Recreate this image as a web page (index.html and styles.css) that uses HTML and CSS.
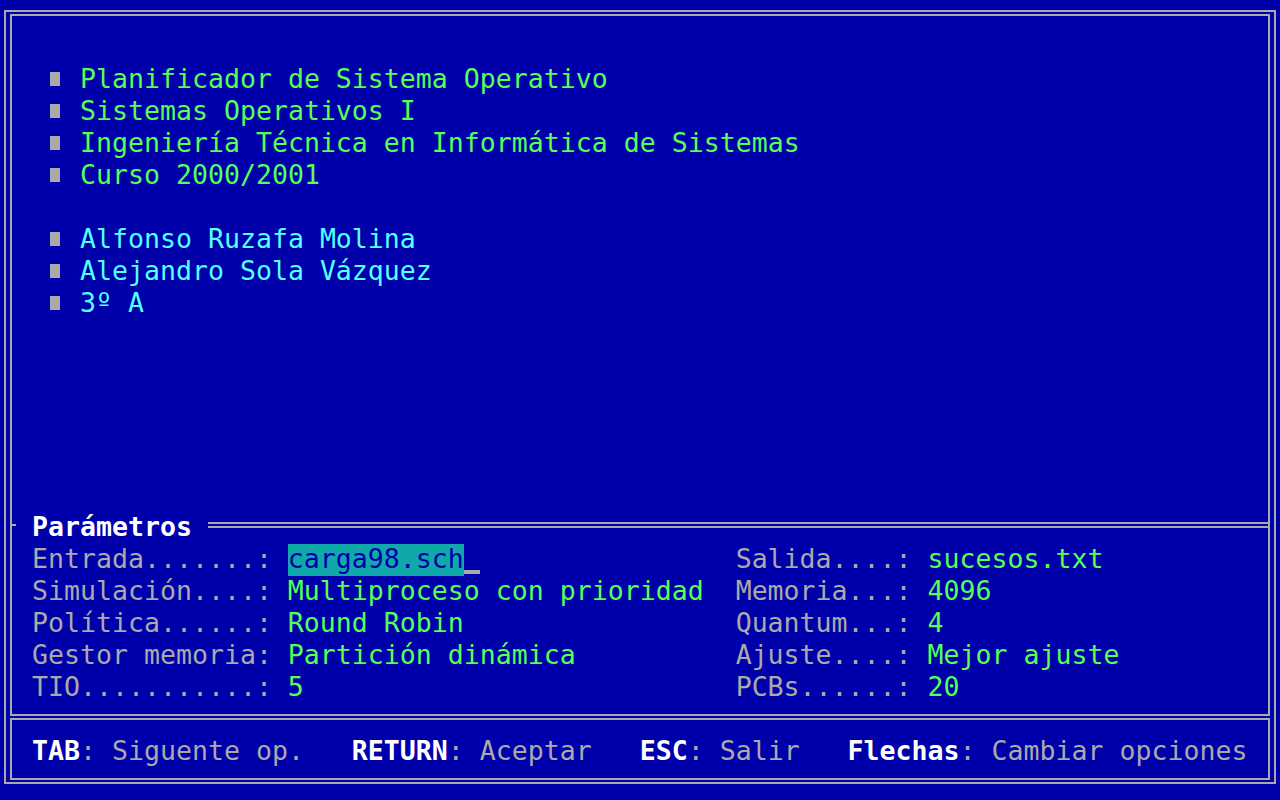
FILE: index.html
```html
<!DOCTYPE html>
<html lang="es">
<head>
<meta charset="utf-8">
<title>Planificador de Sistema Operativo</title>
<link rel="stylesheet" href="styles.css">
</head>
<body>
<div class="outer">
  <div class="panel panel-main">
    <div class="info">
      <ul class="list list-course">
        <li class="item"><span class="bullet"></span><span>Planificador de Sistema Operativo</span></li>
        <li class="item"><span class="bullet"></span><span>Sistemas Operativos I</span></li>
        <li class="item"><span class="bullet"></span><span>Ingeniería Técnica en Informática de Sistemas</span></li>
        <li class="item"><span class="bullet"></span><span>Curso 2000/2001</span></li>
      </ul>
      <ul class="list list-authors">
        <li class="item"><span class="bullet"></span><span>Alfonso Ruzafa Molina</span></li>
        <li class="item"><span class="bullet"></span><span>Alejandro Sola Vázquez</span></li>
        <li class="item"><span class="bullet"></span><span>3º A</span></li>
      </ul>
    </div>
    <div class="divider"><span class="stub"></span><span class="title">Parámetros</span><span class="rule"></span></div>
    <div class="params">
      <div class="param"><span class="label">Entrada.......:</span><span class="value"><span class="field">carga98.sch</span><span class="cursor"></span></span></div>
      <div class="param"><span class="label label-short">Salida....:</span><span class="value">sucesos.txt</span></div>
      <div class="param"><span class="label">Simulación....:</span><span class="value">Multiproceso con prioridad</span></div>
      <div class="param"><span class="label label-short">Memoria...:</span><span class="value">4096</span></div>
      <div class="param"><span class="label">Política......:</span><span class="value">Round Robin</span></div>
      <div class="param"><span class="label label-short">Quantum...:</span><span class="value">4</span></div>
      <div class="param"><span class="label">Gestor memoria:</span><span class="value">Partición dinámica</span></div>
      <div class="param"><span class="label label-short">Ajuste....:</span><span class="value">Mejor ajuste</span></div>
      <div class="param"><span class="label">TIO...........:</span><span class="value">5</span></div>
      <div class="param"><span class="label label-short">PCBs......:</span><span class="value">20</span></div>
    </div>
  </div>
  <div class="panel panel-keys">
    <div class="keys">
      <span class="hint"><span class="key">TAB</span>: Siguente op.</span>
      <span class="hint"><span class="key">RETURN</span>: Aceptar</span>
      <span class="hint"><span class="key">ESC</span>: Salir</span>
      <span class="hint"><span class="key">Flechas</span>: Cambiar opciones</span>
    </div>
  </div>
</div>
</body>
</html>
```

FILE: styles.css
```css
html, body {
  margin: 0;
  padding: 0;
}

body {
  width: 1280px;
  height: 800px;
  overflow: hidden;
  background: #0000aa;
  color: #aaaaaa;
  font-family: "DejaVu Sans Mono", "Liberation Mono", monospace;
  font-size: 26.576px;
  line-height: 30px;
}

.outer {
  box-sizing: border-box;
  margin: 10px 4px 0 4px;
  height: 774px;
  border: 2px solid #aaaaaa;
  padding: 2px 4px;
  display: flex;
  flex-direction: column;
  gap: 2px;
}

.panel {
  box-sizing: border-box;
  border: 2px solid #aaaaaa;
}

.panel-main {
  height: 702px;
  padding-bottom: 10px;
}

.panel-keys {
  height: 62px;
  padding-top: 16px;
}

.info {
  box-sizing: border-box;
  height: 496px;
  padding: 48px 0 0 36px;
}

.list {
  list-style: none;
  margin: 0;
  padding: 0;
}

.list-course {
  color: #55ff55;
  margin-bottom: 32px;
}

.list-authors {
  color: #55ffff;
}

.item {
  display: flex;
  align-items: flex-start;
  height: 32px;
  white-space: pre;
}

.bullet {
  flex: none;
  width: 10px;
  height: 14px;
  margin: 8px 20px 0 2px;
  background: #aaaaaa;
}

.divider {
  display: flex;
  align-items: flex-start;
  height: 32px;
}

.stub {
  flex: none;
  width: 4px;
  height: 2px;
  margin-top: 12px;
  background: #aaaaaa;
}

.title {
  flex: none;
  margin: 0 1ch 0 16px;
  color: #ffffff;
  font-weight: bold;
  white-space: pre;
}

.rule {
  flex: 1;
  height: 2px;
  margin-top: 10px;
  border-top: 2px solid #aaaaaa;
  border-bottom: 2px solid #aaaaaa;
}

.params {
  display: grid;
  grid-template-columns: 44ch 1fr;
  grid-auto-rows: 32px;
  margin-left: 20px;
}

.param {
  display: flex;
  white-space: pre;
}

.label {
  flex: none;
  width: 16ch;
}

.label-short {
  width: 12ch;
}

.value {
  color: #55ff55;
}

.field {
  display: inline-block;
  vertical-align: top;
  height: 32px;
  background: #10a8a8;
  color: #0000aa;
}

.cursor {
  display: inline-block;
  vertical-align: top;
  width: 1ch;
  height: 4px;
  margin-top: 26px;
  background: #aaaaaa;
}

.keys {
  display: flex;
  gap: 3ch;
  height: 32px;
  margin-left: 20px;
  white-space: pre;
}

.key {
  color: #ffffff;
  font-weight: bold;
}
```
